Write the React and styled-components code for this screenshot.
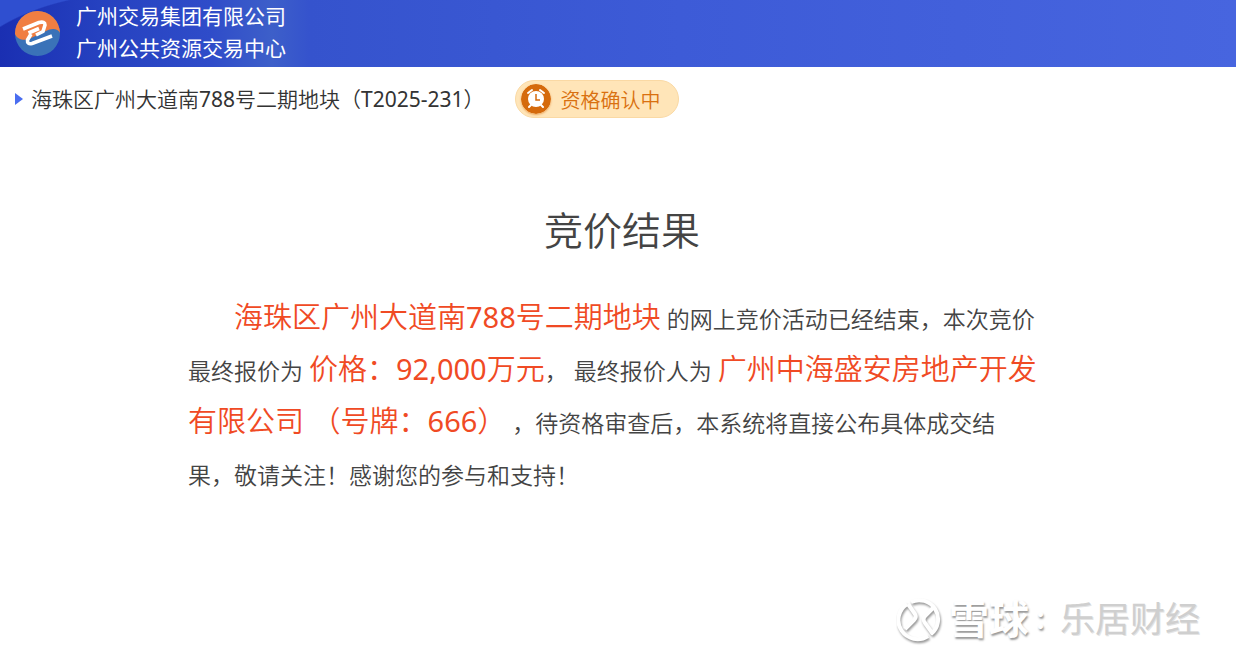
import React from "react";
import styled, { createGlobalStyle } from "styled-components";

const GlobalStyle = createGlobalStyle`
  * { box-sizing: border-box; }
  body {
    margin: 0;
    background: #fff;
    color: #444;
    font-family: "Noto Sans", "Noto Sans CJK SC", sans-serif;
    font-weight: 350;
    text-spacing-trim: space-all;
  }
  h1, h2, p { margin: 0; font-weight: inherit; }
`;

const Page = styled.div`
  display: flex;
  flex-direction: column;
  min-height: 100vh;
`;

const Header = styled.header`
  display: flex;
  align-items: center;
  gap: 16px;
  height: 67px;
  padding: 0 15px;
  color: #fff;
  background:
    radial-gradient(ellipse 190px 122px at 130px 115px, transparent 99%, #2f4fd0 100%) 0 0 / 120px 100% no-repeat,
    linear-gradient(90deg, #1a2fb2 0%, #2541c0 8%, #2f4cc9 17%, #3d5fc9 22%, #3553cd 25%, #3d5bd7 55%, #4765df 100%);
`;

const Logo = styled.svg`
  flex: none;
  width: 45px;
  height: 45px;
`;

const Organisation = styled.div`
  padding-bottom: 4px;
  font-size: 21px;
  font-weight: 400;
  line-height: 32px;
`;

const TitleBar = styled.div`
  display: flex;
  align-items: center;
  padding: 13px 15px 0;
`;

const Marker = styled.span`
  border: solid transparent;
  border-width: 6px 0 6px 8px;
  border-left-color: #4a6df0;
  margin-right: 8px;
`;

const Title = styled.h1`
  color: #333;
  font-size: 21px;
  line-height: 38px;
  margin-right: 30px;
`;

const Figure = styled.span`
  font-weight: 400;
`;

const Status = styled.div`
  display: flex;
  align-items: center;
  gap: 10px;
  height: 38px;
  padding: 0 17px 0 5px;
  border: 1px solid #fad9a4;
  border-radius: 19px;
  background: #ffe5b8;
  color: #d9700f;
  font-size: 20px;
`;

const ClockIcon = styled.svg`
  flex: none;
  width: 30px;
  height: 30px;
  border-radius: 50%;
  box-shadow: 0 1px 2px #d9700f88;
`;

const Result = styled.main`
  padding: 82px 180px 0 188px;
`;

const Heading = styled.h2`
  text-align: center;
  font-size: 39px;
  line-height: 60px;
`;

const Notice = styled.p`
  margin-top: 33px;
  padding-right: 16px;
  font-size: 23px;
  line-height: 52px;
  text-indent: 2em;
`;

const Highlight = styled.span`
  color: #f04a24;
  font-size: 29px;
  line-height: 29px;
`;

const Watermark = styled.footer`
  display: flex;
  align-items: center;
  justify-content: flex-end;
  margin-top: auto;
  padding: 0 36px 16px;
  line-height: 48px;
  color: #fff;
`;

const Snowball = styled.svg`
  width: 46px;
  height: 48px;
  margin-right: 6px;
  filter: drop-shadow(1px 2px 1px #999);
`;

const Brand = styled.span`
  font-size: 40px;
  font-weight: 700;
  text-shadow: 1px 2px 2px #999;
`;

const Colon = styled(Brand)`
  padding-left: 5px;
  font-size: 26px;
`;

const Author = styled.span`
  font-size: 35px;
  font-weight: 400;
  color: #cfcfcf;
  text-shadow: 1px 1px 0 #e4e4e4;
`;

export default function App() {
  return (
    <Page>
      <GlobalStyle />
      <Header>
        <Logo viewBox="0 0 45 45" aria-hidden="true">
          <circle cx="22.500" cy="22.500" r="22.500" fill="#3a72b8" />
          <path d="M0 23A22.500 22.500 0 0 1 45 22C43 17 36 17 31 20L14 28C8 30 2 28 0 23Z" fill="#f07e42" />
          <path d="M8 18L24 11.500Q30 10 30 14L28 20.500L21 24" fill="none" stroke="#fff" strokeWidth="3.600" strokeLinejoin="round" />
          <path d="M24 17.500L13.500 22M16 23L12.500 29Q12 33.500 17 32.500L37 25" fill="none" stroke="#fff" strokeWidth="3.600" strokeLinejoin="round" />
        </Logo>
        <Organisation>
          <div>广州交易集团有限公司</div>
          <div>广州公共资源交易中心</div>
        </Organisation>
      </Header>
      <TitleBar>
        <Marker />
        <Title>
          海珠区广州大道南<Figure>788</Figure>号二期地块（<Figure>T2025-231</Figure>）
        </Title>
        <Status>
          <ClockIcon viewBox="0 0 30 30" aria-hidden="true">
            <circle cx="15" cy="15" r="15" fill="#d56a0c" />
            <circle cx="15" cy="15" r="8" fill="#fff" />
            <path d="M7 9L11 6M23 9L19 6M10 21L8 23M20 21L22 23" stroke="#fff" strokeWidth="2" strokeLinecap="round" />
            <path d="M15 10V16H19" fill="none" stroke="#d56a0c" strokeWidth="1.500" />
          </ClockIcon>
          资格确认中
        </Status>
      </TitleBar>
      <Result>
        <Heading>竞价结果</Heading>
        <Notice>
          <Highlight>海珠区广州大道南<Figure>788</Figure>号二期地块</Highlight>{" "}
          的网上竞价活动已经结束，本次竞价最终报价为{" "}
          <Highlight>价格：<Figure>92,000</Figure>万元</Highlight>， 最终报价人为{" "}
          <Highlight>广州中海盛安房地产开发有限公司 （号牌：<Figure>666</Figure>）</Highlight>{" "}
          ，待资格审查后，本系统将直接公布具体成交结果，敬请关注！感谢您的参与和支持！
        </Notice>
      </Result>
      <Watermark>
        <Snowball viewBox="0 0 46 48" aria-hidden="true">
          <path d="M14 7A19 19 0 0 1 34 39M31 41A19 19 0 0 1 10 9" fill="none" stroke="#fff" strokeWidth="4" />
          <path d="M11 9L18 19Q20 22 17 25L8 34M36 13L28 21Q25 24 28 28L36 39" fill="none" stroke="#fff" strokeWidth="4" />
        </Snowball>
        <Brand>雪球</Brand>
        <Colon>：</Colon>
        <Author>乐居财经</Author>
      </Watermark>
    </Page>
  );
}
